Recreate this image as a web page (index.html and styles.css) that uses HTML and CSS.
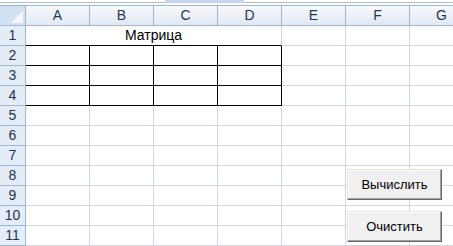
FILE: index.html
```html
<!DOCTYPE html>
<html lang="ru">
<head>
	<meta charset="UTF-8">
	<title>Матрица</title>
	<link rel="stylesheet" href="styles.css">
</head>
<body>
	<div class="sheet">
		<!-- полоса над заголовками -->
		<div class="topbar"><span class="thumb"></span></div>

		<div class="grid">
			<div class="corner"><span class="tri"></span></div>
			<div class="col_head">A</div>
			<div class="col_head">B</div>
			<div class="col_head">C</div>
			<div class="col_head">D</div>
			<div class="col_head">E</div>
			<div class="col_head">F</div>
			<div class="col_head">G</div>

			<div class="row_head">1</div>
			<div class="cell title">Матрица</div>
			<div class="cell"></div><div class="cell"></div><div class="cell"></div>

			<div class="row_head">2</div>
			<div class="cell m"></div><div class="cell m"></div><div class="cell m"></div><div class="cell m"></div>
			<div class="cell"></div><div class="cell"></div><div class="cell"></div>

			<div class="row_head">3</div>
			<div class="cell m"></div><div class="cell m"></div><div class="cell m"></div><div class="cell m"></div>
			<div class="cell"></div><div class="cell"></div><div class="cell"></div>

			<div class="row_head">4</div>
			<div class="cell m"></div><div class="cell m"></div><div class="cell m"></div><div class="cell m"></div>
			<div class="cell"></div><div class="cell"></div><div class="cell"></div>

			<div class="row_head">5</div>
			<div class="cell"></div><div class="cell"></div><div class="cell"></div><div class="cell"></div>
			<div class="cell"></div><div class="cell"></div><div class="cell"></div>

			<div class="row_head">6</div>
			<div class="cell"></div><div class="cell"></div><div class="cell"></div><div class="cell"></div>
			<div class="cell"></div><div class="cell"></div><div class="cell"></div>

			<div class="row_head">7</div>
			<div class="cell"></div><div class="cell"></div><div class="cell"></div><div class="cell"></div>
			<div class="cell"></div><div class="cell"></div><div class="cell"></div>

			<div class="row_head">8</div>
			<div class="cell"></div><div class="cell"></div><div class="cell"></div><div class="cell"></div>
			<div class="cell"></div><div class="cell"></div><div class="cell"></div>

			<div class="row_head">9</div>
			<div class="cell"></div><div class="cell"></div><div class="cell"></div><div class="cell"></div>
			<div class="cell"></div><div class="cell"></div><div class="cell"></div>

			<div class="row_head">10</div>
			<div class="cell"></div><div class="cell"></div><div class="cell"></div><div class="cell"></div>
			<div class="cell"></div><div class="cell"></div><div class="cell"></div>

			<div class="row_head">11</div>
			<div class="cell"></div><div class="cell"></div><div class="cell"></div><div class="cell"></div>
			<div class="cell"></div><div class="cell"></div><div class="cell"></div>
		</div>

		<!-- кнопки лежат поверх листа -->
		<button class="btn btn_calc">Вычислить</button>
		<button class="btn btn_clear">Очистить</button>
	</div>
</body>
</html>
```

FILE: styles.css
```css
* {
	margin: 0;
	padding: 0;
	box-sizing: border-box;
}

body {
	background-color: #fff;
	font-family: "Liberation Sans", Arial, sans-serif;
	font-size: 14px;
	overflow: hidden;
}

.sheet {
	width: 453px;
	height: 246px;
	position: relative;
	overflow: hidden;
}

.topbar {
	height: 5px;
	border-top: 1px solid #fff;
	background-color: #fff;
	position: relative;
}

.topbar::before {
	content: "";
	display: block;
	height: 1px;
	margin-top: 1px;
	background-color: #a9bcd3;
}

.thumb {
	position: absolute;
	left: 165px;
	top: -1px;
	width: 79px;
	height: 3px;
	background-color: #c5d7ee;
}

.grid {
	display: grid;
	grid-template-columns: 26px repeat(7, 64px);
	grid-template-rows: 21px repeat(11, 20px);
	width: 474px;
}

.corner {
	background-color: #d3e0f1;
	border-top: 1px solid #9eb6ce;
	border-right: 1px solid #9eb6ce;
	border-bottom: 1px solid #9eb6ce;
	position: relative;
}

.tri {
	position: absolute;
	right: 2px;
	bottom: 2px;
	width: 0;
	height: 0;
	border-left: 12px solid transparent;
	border-bottom: 12px solid #f4f7fb;
}

.col_head {
	background: linear-gradient(#f7f9fc, #e1e8f2);
	border-top: 1px solid #9eb6ce;
	border-right: 1px solid #9eb6ce;
	border-bottom: 1px solid #9eb6ce;
	color: #1d3553;
	text-align: center;
	line-height: 19px;
}

.row_head {
	background-color: #e4ecf7;
	border-right: 1px solid #9eb6ce;
	border-bottom: 1px solid #9eb6ce;
	color: #1d3553;
	text-align: center;
	line-height: 19px;
}

.cell {
	border-right: 1px solid #d0d7e5;
	border-bottom: 1px solid #d0d7e5;
}

.title {
	grid-column: span 4;
	border-right-color: #d0d7e5;
	border-bottom-color: #000;
	text-align: center;
	line-height: 19px;
	color: #000;
}

.m {
	border-right-color: #000;
	border-bottom-color: #000;
}

.btn {
	position: absolute;
	left: 347px;
	width: 95px;
	height: 31px;
	background-color: #f0f0f0;
	border: 1px solid;
	border-color: #e3e3e3 #696969 #696969 #e3e3e3;
	box-shadow: inset -1px -1px 0 #a0a0a0, inset 1px 1px 0 #fff;
	font-family: "Liberation Sans", Arial, sans-serif;
	font-size: 13px;
	color: #000;
	cursor: pointer;
}

.btn_calc {
	top: 169px;
}

.btn_clear {
	top: 211px;
}
```
